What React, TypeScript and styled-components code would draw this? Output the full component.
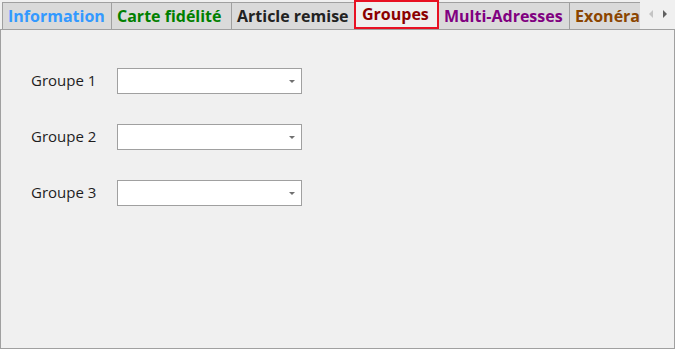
import React from "react";
import styled, { createGlobalStyle } from "styled-components";

const Global = createGlobalStyle`
  html, body { margin: 0; padding: 0; background: #f0f0f0; }
  body { font-family: "Open Sans", "Noto Sans", sans-serif; }
`;

const Window = styled.div`
  width: 675px;
  height: 349px;
  display: flex;
  flex-direction: column;
  background: #f0f0f0;
  overflow: hidden;
`;

const Strip = styled.div`
  height: 29px;
  display: flex;
  align-items: flex-end;
`;

const TabRow = styled.div`
  width: 640px;
  height: 29px;
  display: flex;
  align-items: flex-end;
  overflow: hidden;
  padding-left: 2px;
  box-sizing: border-box;
`;

const Tab = styled.div<{ $color: string; $width: number; $active?: boolean }>`
  flex: 0 0 auto;
  box-sizing: border-box;
  width: ${(p) => p.$width}px;
  height: ${(p) => (p.$active ? 29 : 27)}px;
  margin-left: -1px;
  &:first-child { margin-left: 0; }
  background: ${(p) => (p.$active ? "#f0f0f0" : "#dadada")};
  border: ${(p) => (p.$active ? "2px solid #e81123" : "1px solid #a0a0a0")};
  border-bottom: ${(p) => (p.$active ? "2px solid #e81123" : "none")};
  position: relative;
  z-index: ${(p) => (p.$active ? 1 : 0)};
  color: ${(p) => p.$color};
  font-weight: 700;
  font-size: 16px;
  line-height: ${(p) => (p.$active ? 24 : 27)}px;
  white-space: nowrap;
  padding-left: ${(p) => (p.$active ? 6 : 5)}px;
`;

const Arrows = styled.div`
  flex: 1;
  height: 29px;
  display: flex;
  align-items: center;
  justify-content: center;
  gap: 8px;
  padding-bottom: 2px;
  box-sizing: border-box;
`;

const Arrow = styled.svg<{ $disabled?: boolean }>`
  width: 6px;
  height: 8px;
  fill: ${(p) => (p.$disabled ? "#c4c4c4" : "#606060")};
`;

const Panel = styled.div`
  flex: 1;
  box-sizing: border-box;
  border: 1px solid #a0a0a0;
  background: #f0f0f0;
  padding: 38px 0 0 30px;
  display: flex;
  flex-direction: column;
  gap: 30px;
`;

const FieldRow = styled.div`
  display: flex;
  align-items: center;
  height: 26px;
`;

const Label = styled.div`
  width: 86px;
  font-size: 15px;
  color: #1e1e1e;
  font-family: "Open Sans", "Noto Sans", sans-serif;
  padding-bottom: 2px;
`;

const Combo = styled.div`
  width: 185px;
  height: 26px;
  box-sizing: border-box;
  border: 1px solid #a0a0a0;
  background: #ffffff;
  display: flex;
  align-items: center;
  justify-content: flex-end;
  padding-right: 6px;
`;

const Caret = styled.svg`
  width: 6px;
  height: 3px;
  fill: #707070;
`;

const tabs = [
  { label: "Information", color: "#3399ff", width: 110 },
  { label: "Carte fidélité", color: "#008000", width: 121 },
  { label: "Article remise", color: "#222222", width: 124 },
  { label: "Groupes", color: "#8b0000", width: 85, active: true },
  { label: "Multi-Adresses", color: "#800080", width: 132 },
  { label: "Exonération", color: "#8b4500", width: 110 },
];

export default function App() {
  return (
    <Window>
      <Global />
      <Strip>
        <TabRow>
          {tabs.map((t) => (
            <Tab key={t.label} $color={t.color} $width={t.width} $active={t.active}>
              {t.label}
            </Tab>
          ))}
        </TabRow>
        <Arrows>
          <Arrow $disabled viewBox="0 0 6 8">
            <polygon points="5,0 5,8 1,4" />
          </Arrow>
          <Arrow viewBox="0 0 6 8">
            <polygon points="1,0 1,8 5,4" />
          </Arrow>
        </Arrows>
      </Strip>
      <Panel>
        {["Groupe 1", "Groupe 2", "Groupe 3"].map((g) => (
          <FieldRow key={g}>
            <Label>{g}</Label>
            <Combo>
              <Caret viewBox="0 0 6 3">
                <polygon points="0,0 6,0 3,3" />
              </Caret>
            </Combo>
          </FieldRow>
        ))}
      </Panel>
    </Window>
  );
}
